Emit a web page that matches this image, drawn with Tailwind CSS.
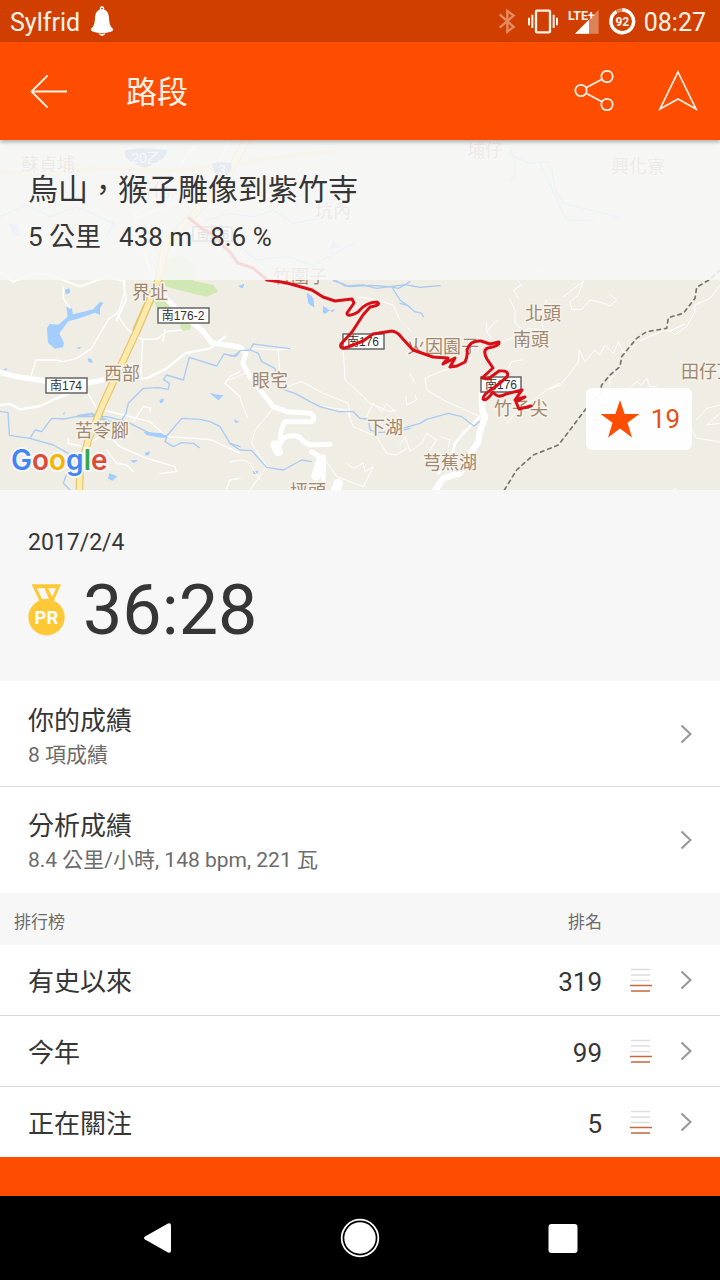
<!DOCTYPE html>
<html lang="zh-Hant">
<head>
<meta charset="utf-8">
<meta name="viewport" content="width=device-width, initial-scale=1">
<title>路段</title>
<script src="https://cdn.jsdelivr.net/npm/@tailwindcss/browser@4"></script>
</head>
<body class="flex min-h-screen flex-col bg-white font-['Roboto','Noto_Sans_CJK_TC',sans-serif] text-[#363636]">

<!-- Status bar -->
<div class="flex h-[42px] items-center bg-[#d03f00] pr-3.5 pl-2.5 text-[25px] text-[#fff3ea]">
  <span class="pt-1">Sylfrid</span>
  <svg class="ml-2.5 h-[30px] w-6" viewBox="0 0 72 90" fill="#fff" aria-hidden="true">
    <circle cx="36" cy="8" r="5" fill="none" stroke="#fff" stroke-width="4"/>
    <path d="M36 10C20 11 16 22 15 36C14 54 11 62 3 68C1 72 4 75 10 77C26 82 46 82 62 77C68 75 71 72 69 68C61 62 58 54 57 36C56 22 52 11 36 10Z"/>
    <path d="M25 82Q36 85 47 82Q44 89 36 90Q28 89 25 82Z"/>
  </svg>
  <div class="ml-auto flex items-center">
    <svg class="h-7 w-[102px]" viewBox="0 0 306 84" aria-hidden="true">
      <path d="M8 22L50 60L31 74V12L50 26L8 62" fill="none" stroke="#e58b62" stroke-width="7"/>
      <g fill="none" stroke="#fff3ea" stroke-width="6">
        <rect x="117" y="11" width="42" height="65" rx="3" stroke-width="7"/>
        <path d="M106 23V63M96 32V55M170 23V63M180 32V55"/>
      </g>
      <path d="M234 80L305 8V80Z" fill="#e08258"/>
      <path d="M234 80L276 38V80Z" fill="#fff"/>
      <text x="213" y="38" font-size="37" font-weight="700" fill="#fff3ea" font-family="Roboto">LTE+</text>
    </svg>
    <svg class="ml-2.5 h-[27px] w-[27px]" viewBox="0 0 81 81" aria-hidden="true">
      <circle cx="40" cy="40" r="34" fill="none" stroke="#e58b62" stroke-width="10"/>
      <path d="M40 6A34 34 0 1 1 22 11" fill="none" stroke="#fff" stroke-width="10"/>
      <text x="40" y="53" text-anchor="middle" font-size="36" font-weight="700" fill="#fff3ea" font-family="Roboto">92</text>
    </svg>
    <span class="ml-2 pt-1">08:27</span>
  </div>
</div>

<!-- App bar -->
<header class="relative z-10 flex h-[98px] items-center bg-[#ff4d00] pr-5 pl-7 text-[#fff3ea] shadow-[0_2px_4px_rgba(0,0,0,0.3)]">
  <button type="button" aria-label="返回" class="h-10 w-10">
    <svg class="h-10 w-10" viewBox="0 0 40 40" fill="none" stroke="currentColor" stroke-width="1.800"><path d="M19.500 4.500L3.500 20.500L19.500 36.500M3.500 20.500H39"/></svg>
  </button>
  <h1 class="ml-[58px] pt-1 text-[31px]">路段</h1>
  <button type="button" aria-label="分享" class="ml-auto h-[42px] w-10">
    <svg class="h-[42px] w-10" viewBox="0 0 40 42" fill="none" stroke="currentColor" stroke-width="1.700"><circle cx="7" cy="20.500" r="5.700"/><circle cx="33" cy="6.500" r="5.700"/><circle cx="33" cy="34.500" r="5.700"/><path d="M12 17.800L28 9.200M12 23.200L28 31.800"/></svg>
  </button>
  <button type="button" aria-label="導航" class="ml-[42px] h-[42px] w-11">
    <svg class="h-[42px] w-11" viewBox="0 0 44 42" fill="none" stroke="currentColor" stroke-width="1.700"><path d="M22 2L40 39L22 29L4 39Z"/></svg>
  </button>
</header>

<!-- Map -->
<section class="relative h-[350px] overflow-hidden bg-[#efede4]">
  <svg class="h-full w-full" viewBox="0 140 720 350" preserveAspectRatio="xMidYMid slice" fill="none" stroke-linejoin="round" stroke-linecap="round" aria-label="地圖">
    <!-- north tile -->
    <g transform="translate(0 140) scale(.33333)">
      <path d="M485 422L495 360L540 345L580 370V422L640 435L655 455L620 470L575 460L500 440Z" fill="#d0e8b4"/>
      <path d="M25 250L50 255L62 285L40 290ZM920 458L940 475L943 502L930 495ZM968 505L990 510L975 522ZM195 450L208 445L210 458L200 462ZM1000 300L1015 320L985 330ZM715 438L733 432L728 445Z" fill="#a3ccff"/>
      <path d="M0 230L80 195L150 230L230 200L340 250L320 290M620 240L690 220L760 230L820 210L880 250L960 235M720 320L770 360L860 350L940 375L1060 310M1000 422L1050 440L1110 436L1170 440L1215 434L1260 442L1320 437M1530 10L1540 50L1590 70L1640 65L1655 85L1665 150L1690 190L1860 232M1620 69L1680 200L1700 240L1780 242M1530 30L1545 65V105L1528 127" stroke="#a5c8f0" stroke-width="4"/>
      <path d="M0 395L40 425L100 400L150 405L240 440L320 410L370 422M590 10L480 160L400 230L430 330L460 422M400 235L500 200L620 150L690 0M370 422L378 480L350 540" stroke="#fff" stroke-width="6"/>
      <path d="M0 95L120 105L300 85L520 90L700 75L800 55L1000 35" stroke="#f7df9a" stroke-width="14"/>
      <path d="M740 0L670 130L560 245L495 320L475 422L410 570" stroke="#e5c56d" stroke-width="25"/>
      <path d="M740 0L670 130L560 245L495 320L475 422L410 570" stroke="#fce9ac" stroke-width="18"/>
      <path d="M375 30Q435 20 502 30Q502 60 435 83Q375 65 375 42ZM637 70Q665 62 695 70Q700 100 667 112Q635 100 637 70Z" fill="#6b96c7"/>
    </g>
    <!-- west tile -->
    <g transform="translate(0 280) scale(.33333)">
      <path d="M460 60L498 65L520 85L575 135L568 150L543 152L540 125L510 100L475 92Z" fill="#d0e8b4"/>
      <path d="M141 145L148 132L175 134L203 110L199 80L216 85L218 103L248 96L280 88L300 65L310 68L300 85V105L285 98L238 115L205 124L178 160L192 190L189 202L165 206L144 188ZM195 32L208 27L210 38L198 42ZM230 203L245 200L238 208ZM263 234L275 238L278 249L266 246ZM478 360L491 355L490 367L480 370ZM628 338L652 344L671 346L655 361ZM435 518L450 514L447 524L437 527ZM390 541L414 540L402 549ZM328 580L352 589L337 602L324 596ZM188 400L196 396L192 405ZM10 268L22 264L18 272Z" fill="#a3ccff"/>
      <g stroke="#fff" stroke-width="4">
        <path d="M375 0L373 40L357 92L350 100L375 140L400 162L425 178L470 177L500 155L545 150M495 150L488 184M428 178L422 290M350 100L325 118L275 205L230 235L190 245L165 240L108 240L92 290M258 330L290 385L370 405L450 425L500 470L590 475L635 480L720 520M400 425L430 380L450 383V395M190 20V55L210 85M205 475V490L250 500L300 470L340 480L360 500L440 535L525 560L530 575L480 580M320 510L350 550L380 555L400 575M675 310L690 290L720 275M675 310L720 350M680 625L690 600L720 595"/>
      </g>
      <path d="M0 375L30 372L60 388L120 378L170 355L220 335M320 295H440L500 265L555 220L630 205L675 170" stroke="#fff" stroke-width="7"/>
      <path d="M0 277L50 290L150 305L210 320L330 295M480 35L540 100L605 150L635 188L720 202" stroke="#fff" stroke-width="16"/>
      <g stroke="#a9ccf3" stroke-width="4">
        <path d="M0 394L24 398L28 466L90 475L105 450L125 455L155 415L190 417L230 410L320 410L380 425L450 460L500 468L545 415L600 418L630 425L660 440L690 490L720 500M90 475L160 495L205 520L208 560L190 610L210 630M362 425L378 400L385 370L430 325L475 323L505 328L508 310L490 298L500 285L550 300L568 232L650 258L672 222L700 228L718 215M500 470L495 485L520 500L545 488L580 490L598 503"/>
        <path d="M235 408L275 402L335 428" stroke-width="8"/>
      </g>
      <path d="M430 455L485 460L505 475L475 472L440 465Z" fill="#a3ccff"/>
      <path d="M475 0L412 150L310 370L265 480L240 570L238 640" stroke="#e5c56d" stroke-width="23"/>
      <path d="M475 0L412 150L310 370L265 480L240 570L238 640" stroke="#fce9ac" stroke-width="16"/>
    </g>
    <!-- centre tile -->
    <g transform="translate(230 270) scale(.33333)">
      <path d="M230 70L245 78L252 112L235 100ZM280 108L292 115L285 132L278 125ZM300 122L315 117L308 127ZM25 50L43 43L38 55ZM12 448L28 456L15 458ZM68 603L85 602L82 612H70Z" fill="#a3ccff"/>
      <path d="M60 235L140 240L190 235M145 240L150 310L170 350L215 335L280 370L355 400L360 440M0 330L55 305M5 360L30 380L35 400L53 443M130 415L75 480L65 520L110 590L60 660M0 575L40 570L60 580L90 630M340 240L345 330L380 360L420 400L480 425L495 420M410 440L430 400L455 425L470 400L495 425M280 410L350 420L370 470L440 500L470 550L500 555L530 535M290 575L320 620L400 650L430 590L405 605L400 580L370 595L350 580M380 80L440 90L490 105L510 150L540 180" stroke="#fff" stroke-width="3"/>
      <path d="M0 225L30 232L48 250L38 280L60 320L90 360L130 410L170 425L240 430Q260 440 245 455L165 455Q150 480 150 515M140 540L160 505Q205 485 220 515L240 525L300 523M245 545L275 565L260 610M280 560V660" stroke="#fff" stroke-width="15"/>
      <path d="M135 525L145 545M274 568L258 618M325 640L315 665" stroke="#fff" stroke-width="28"/>
      <path d="M315 30L345 48L400 45L440 55L480 50L505 55L540 35M488 55L510 90L540 112M0 258H20L30 242L60 240L70 222L180 236M60 240L85 250L95 275L135 295L138 330L150 355L195 370L240 395L270 410L325 425L370 425L390 445L415 447L420 480L440 487H495L540 475M0 520L30 540L65 542L110 592L160 600L215 570L245 575" stroke="#a9ccf3" stroke-width="4"/>
    </g>
    <!-- south-east tile -->
    <g transform="translate(400 300) scale(.33333)">
      <path d="M330 0L345 30L345 70L370 90M440 0L420 50L430 90L385 85L350 110L290 130M290 60L260 95L275 115M260 70V90M180 195L120 215L75 235L80 270L130 300L240 350M30 220L45 250M45 285L50 300L20 315L18 290M0 435L15 410L30 455L65 430L80 400L110 420L90 450M120 410L150 420L145 440M325 205L335 185L365 180M320 370L350 335L400 300L440 270L480 250" stroke="#fff" stroke-width="3"/>
      <path d="M240 350L185 405L165 430L155 470L115 520" stroke="#fff" stroke-width="8"/>
      <path d="M245 285L247 330L255 350L240 395L235 425L205 470L180 520L130 535L100 580" stroke="#fff" stroke-width="19"/>
      <path d="M0 10L20 15L45 35L65 40L70 50M5 386L60 370L80 358L145 340L185 350L222 378L238 365" stroke="#a9ccf3" stroke-width="4"/>
    </g>
    <!-- east tile -->
    <g transform="translate(550 270) scale(.33333)">
      <path d="M100 32L85 75L60 95L65 118L95 118L120 90L155 98L180 108L200 90L182 75M40 80L100 35M510 45L480 85L435 105V125L410 170L375 195L362 182L405 162L362 182L345 180L275 210L245 235L220 248L205 215L190 250L165 225L150 255L135 240L105 275L88 240L85 275L60 310L30 345L0 357M240 352L260 335L275 345L290 325L300 350H320M180 350L178 330L210 300M510 405L470 415L440 450M510 430L470 465L510 460M425 480L440 505L510 515M-10 0L-50 10M380 655L350 672M-100 30L-85 45L-110 60L-95 85" stroke="#fff" stroke-width="3"/>
      <path d="M510 0L480 28L440 52L435 85L400 130L355 143L350 175L290 185L260 205L215 260L210 290L180 315L155 345L150 370L105 420L60 480L25 525L-50 555L-100 600L-140 665" stroke="#77736d" stroke-width="5" stroke-dasharray="11 12"/>
    </g>

    <!-- road numbers -->
    <g font-family="'Liberation Sans','Noto Sans CJK TC',sans-serif" font-size="12" text-anchor="middle">
      <g fill="#fff" stroke="#666" stroke-width="1.500" stroke-linejoin="miter"><path d="M158 308H209V323H158ZM46 378H87V393H46ZM343 334H384V349H343ZM481 377H521V392H481ZM193 227H232V241H193Z"/></g>
      <g fill="#333"><text x="183" y="320">南176-2</text><text x="66" y="390">南174</text><text x="363" y="346">南176</text><text x="501" y="389">南176</text><text x="213" y="239">南176</text></g>
      <g fill="#fff" font-size="14"><text x="146" y="163">20乙</text><text x="222" y="175">3</text></g>
    </g>

    <!-- place names -->
    <g font-family="'Noto Sans CJK TC',sans-serif" font-size="18" fill="#a08870" stroke="#f5f3ec" stroke-width="3" paint-order="stroke" text-anchor="middle">
      <text x="48" y="171">蘇貞埔</text><text x="485" y="157">埔仔</text><text x="638" y="173">興化寮</text><text x="333" y="218">坑內</text><text x="152" y="197">新化</text>
      <text x="300" y="283">竹圍子</text><text x="150" y="299">界址</text><text x="122" y="380">西部</text><text x="102" y="437">苦苓腳</text>
      <text x="270" y="387">眼宅</text><text x="385" y="434">下湖</text><text x="308" y="498">坪頭</text><text x="443" y="353">火因園子</text>
      <text x="543" y="320">北頭</text><text x="531" y="346">南頭</text><text x="521" y="415">竹子尖</text><text x="450" y="469">芎蕉湖</text><text x="708" y="378">田仔頂</text>
    </g>

    <!-- segment route -->
    <g stroke="#d90e17" stroke-width="3">
      <path d="M189 218L200 227L209 233L217 238L223 246L230 252L238 263L253 268L267 280L275 281"/>
      <path d="M275 281L287 283L312 290L323 297L335 301L352 299L354 303L347 313Q347 318 358 312Q366 302 377 302Q382 305 370 307L363 315L352 332L341 344Q339 350 348 347L363 341L373 334L392 331Q398 332 402 338L413 350L433 357L448 358L443 364L455 358L450 367L457 366L465 362Q468 356 467 350Q470 340 481 341L490 344L499 342Q500 346 488 348Q482 350 487 359L493 368L482 378L488 379L499 371Q510 370 507 377L495 387Q483 394 483 399Q486 402 493 392Q498 399 506 394L522 390L515 400L525 397L516 402L519 409L531 406"/>
    </g>
    <!-- map provider wordmark -->
    <text x="11" y="470" font-family="Inter,sans-serif" font-size="28" font-weight="600" stroke="#f7f7f7" stroke-width="4" paint-order="stroke"><tspan fill="#4285f4">G</tspan><tspan fill="#dd4b39">o</tspan><tspan fill="#f4b400">o</tspan><tspan fill="#4285f4">g</tspan><tspan fill="#34a853">l</tspan><tspan fill="#dd4b39">e</tspan></text>
  </svg>

  <div class="absolute inset-x-0 top-0 h-[140px] bg-[#f7f7f7]/88 px-7 pt-7">
    <h2 class="text-[30px] leading-[44px]">烏山，猴子雕像到紫竹寺</h2>
    <p class="mt-1.5 flex gap-[18px] text-[26px] leading-[38px]"><span>5 公里</span><span>438 m</span><span>8.6 %</span></p>
  </div>
  <button type="button" aria-label="收藏 19" class="absolute right-7 bottom-10 flex h-[62px] w-[106px] items-center justify-between rounded-md bg-white/95 pr-3 pl-3.5 text-[26px] text-[#e8501a]">
    <svg class="h-10 w-10" viewBox="0 0 40 40" fill="#ff4d00" aria-hidden="true"><path d="M20 1L24.600 15H39.500L27.500 23.700L32 38.500L20 29.500L8 38.500L12.500 23.700L.500 15H15.400Z"/></svg>
    <span>19</span>
  </button>
</section>

<!-- Best effort -->
<section class="h-[191px] bg-[#f7f7f7] px-7 pt-[38px]">
  <p class="text-[23px] leading-[30px]">2017/2/4</p>
  <div class="mt-[11px] flex items-center">
    <svg class="h-[52px] w-[37px]" viewBox="84 222 112 156" aria-hidden="true">
      <path fill="#ffc837" fill-rule="evenodd" d="M95 222H184L162 272H118ZM111 234L127 268H148L134 234ZM145 234L157 260L169 234Z"/>
      <circle cx="140" cy="322" r="55" fill="#ffc837"/>
      <text x="140" y="343" text-anchor="middle" font-size="56" font-weight="700" fill="#fff" font-family="Roboto">PR</text>
    </svg>
    <p class="ml-[18px] text-[70px] leading-[82px]">36:28</p>
  </div>
</section>

<!-- Result links -->
<nav>
  <a href="#results" class="flex h-[106px] items-center border-b border-[#e0e0e0] pr-7 pl-7">
    <span class="flex-1 pt-1"><span class="block text-[26px] leading-[38px]">你的成績</span><span class="block text-[21px] leading-[30px] text-[#6c6c6c]">8 項成績</span></span>
    <svg class="h-5 w-3" viewBox="0 0 12 20" fill="none" stroke="#999" stroke-width="2.200" aria-hidden="true"><path d="M1.500 1.500L10.500 10L1.500 18.500"/></svg>
  </a>
  <a href="#analysis" class="flex h-[106px] items-center pr-7 pl-7">
    <span class="flex-1 pt-0.5"><span class="block text-[26px] leading-[38px]">分析成績</span><span class="block text-[21px] leading-[30px] text-[#6c6c6c]">8.4 公里/小時, 148 bpm, 221 瓦</span></span>
    <svg class="h-5 w-3" viewBox="0 0 12 20" fill="none" stroke="#999" stroke-width="2.200" aria-hidden="true"><path d="M1.500 1.500L10.500 10L1.500 18.500"/></svg>
  </a>
</nav>

<!-- Leaderboards -->
<table class="w-full border-separate border-spacing-0 text-[26px]">
  <thead>
    <tr class="h-[52px] bg-[#f7f7f7] text-[17px] text-[#6c6c6c]">
      <th scope="col" class="p-0 pt-2 pl-3.5 text-left font-normal">排行榜</th>
      <th scope="col" class="p-0 pt-2 text-right font-normal">排名</th>
      <td class="w-[78px] p-0"></td>
      <td class="w-10 p-0"></td>
    </tr>
  </thead>
  <tbody>
    <tr class="h-[71px] [&>*]:border-b [&>*]:border-[#d8d8d8]">
      <th scope="row" class="p-0 pt-1 pl-7 text-left font-normal"><a href="#all-time">有史以來</a></th>
      <td class="p-0 pt-1 text-right">319</td>
      <td class="p-0 pl-7"><svg class="h-[26px] w-[22px]" viewBox="0 0 22 26" fill="none" stroke-width="1.500" aria-hidden="true"><path d="M1 2.500H20M1 8H20M1 13.500H20" stroke="#ddd"/><path d="M0 18.500H22M1 24H20" stroke="#c4693c"/></svg></td>
      <td class="p-0"><a href="#all-time" aria-label="有史以來"><svg class="h-5 w-3" viewBox="0 0 12 20" fill="none" stroke="#999" stroke-width="2.200"><path d="M1.500 1.500L10.500 10L1.500 18.500"/></svg></a></td>
    </tr>
    <tr class="h-[71px] [&>*]:border-b [&>*]:border-[#d8d8d8]">
      <th scope="row" class="p-0 pt-1 pl-7 text-left font-normal"><a href="#this-year">今年</a></th>
      <td class="p-0 pt-1 text-right">99</td>
      <td class="p-0 pl-7"><svg class="h-[26px] w-[22px]" viewBox="0 0 22 26" fill="none" stroke-width="1.500" aria-hidden="true"><path d="M1 2.500H20M1 8H20M1 13.500H20" stroke="#ddd"/><path d="M0 18.500H22M1 24H20" stroke="#c4693c"/></svg></td>
      <td class="p-0"><a href="#this-year" aria-label="今年"><svg class="h-5 w-3" viewBox="0 0 12 20" fill="none" stroke="#999" stroke-width="2.200"><path d="M1.500 1.500L10.500 10L1.500 18.500"/></svg></a></td>
    </tr>
    <tr class="h-[70px]">
      <th scope="row" class="p-0 pt-1 pl-7 text-left font-normal"><a href="#following">正在關注</a></th>
      <td class="p-0 pt-1 text-right">5</td>
      <td class="p-0 pl-7"><svg class="h-[26px] w-[22px]" viewBox="0 0 22 26" fill="none" stroke-width="1.500" aria-hidden="true"><path d="M1 2.500H20M1 8H20M1 13.500H20" stroke="#ddd"/><path d="M0 18.500H22M1 24H20" stroke="#c4693c"/></svg></td>
      <td class="p-0"><a href="#following" aria-label="正在關注"><svg class="h-5 w-3" viewBox="0 0 12 20" fill="none" stroke="#999" stroke-width="2.200"><path d="M1.500 1.500L10.500 10L1.500 18.500"/></svg></a></td>
    </tr>
  </tbody>
</table>

<div class="flex-1 bg-[#ff4d00]"></div>

<!-- System navigation -->
<div class="flex h-[84px] items-center justify-between bg-black px-[138px]">
  <button type="button" aria-label="返回" class="h-10 w-10"><svg class="h-10 w-10" viewBox="0 0 40 40" fill="#fff"><path d="M7 18.500L30 5.500Q33 4.500 33 7.500V32.500Q33 35.500 30 34.500L7 21.500Q5 20 7 18.500Z"/></svg></button>
  <button type="button" aria-label="主畫面" class="h-10 w-10"><svg class="h-10 w-10" viewBox="0 0 40 40"><circle cx="20" cy="20" r="18.300" fill="none" stroke="#fff" stroke-width="1.800"/><circle cx="20" cy="20" r="15.700" fill="#fff"/></svg></button>
  <button type="button" aria-label="最近使用" class="h-10 w-10"><svg class="h-10 w-10" viewBox="0 0 40 40" fill="#fff"><rect x="6.500" y="6" width="29" height="29" rx="3"/></svg></button>
</div>
</body>
</html>
